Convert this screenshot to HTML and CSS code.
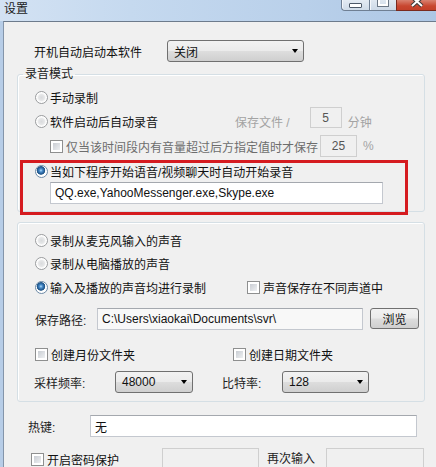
FILE: index.html
```html
<!DOCTYPE html>
<html lang="zh-CN">
<head>
    <meta charset="UTF-8">
    <title>设置</title>
    <link rel="stylesheet" href="styles.css">
</head>
<body>
    <div class="window">
        <div class="titlebar">
            <span class="title">设置</span>
            <div class="caption">
                <span class="cap cap-min"><i></i></span>
                <span class="cap cap-max"><i></i></span>
                <span class="cap cap-close">
                    <svg width="40" height="11" viewBox="0 0 40 11">
                        <path d="M14 -3 L24 6 M24 -3 L14 6" stroke="#3b3b3b" stroke-width="4" fill="none"/>
                        <path d="M14 -3 L24 6 M24 -3 L14 6" stroke="#fff" stroke-width="2" fill="none"/>
                    </svg>
                </span>
            </div>
        </div>

        <div class="client">
            <div class="row startup">
                <span class="lbl-startup">开机自动启动本软件</span>
                <div class="combo combo-startup">关闭</div>
            </div>

            <fieldset class="group mode">
                <legend>录音模式</legend>
                <div class="opt"><span class="radio"></span>手动录制</div>
                <div class="opt opt-tall">
                    <span class="radio"></span>
                    <span class="opt-auto">软件启动后自动录音</span>
                    <span class="dim">保存文件 /</span>
                    <span class="edit off spin">5</span>
                    <span class="dim unit">分钟</span>
                </div>
                <div class="opt opt-sub">
                    <span class="check"></span>
                    <span class="muted">仅当该时间段内有音量超过后方指定值时才保存</span>
                    <span class="edit off pct">25</span>
                    <span class="dim unit">%</span>
                </div>
                <div class="highlight">
                    <div class="opt"><span class="radio on"></span>当如下程序开始语音/视频聊天时自动开始录音</div>
                    <div class="edit apps">QQ.exe,YahooMessenger.exe,Skype.exe</div>
                </div>
            </fieldset>

            <fieldset class="group source">
                <div class="opt"><span class="radio"></span>录制从麦克风输入的声音</div>
                <div class="opt opt-short"><span class="radio"></span>录制从电脑播放的声音</div>
                <div class="opt">
                    <span class="radio on"></span>
                    <span class="opt-both">输入及播放的声音均进行录制</span>
                    <span class="check"></span>声音保存在不同声道中
                </div>
                <div class="row path-row">
                    <span class="lbl-path">保存路径:</span>
                    <span class="edit ro path">C:\Users\xiaokai\Documents\svr\</span>
                    <span class="btn browse">浏览</span>
                </div>
                <div class="row folder-row">
                    <span class="folder-month"><span class="check"></span>创建月份文件夹</span>
                    <span class="check"></span>创建日期文件夹
                </div>
                <div class="row rate-row">
                    <span class="lbl-rate">采样频率:</span>
                    <div class="combo combo-rate">48000</div>
                    <span class="lbl-bit">比特率:</span>
                    <div class="combo combo-bit">128</div>
                </div>
            </fieldset>

            <div class="row hotkey-row">
                <span class="lbl-hotkey">热键:</span>
                <span class="edit hotkey">无</span>
            </div>
            <div class="row pass-row">
                <span class="pass-check"><span class="check"></span>开启密码保护</span>
                <span class="edit off pass"></span>
                <span class="lbl-again">再次输入</span>
                <span class="edit off pass2"></span>
            </div>
        </div>
    </div>
</body>
</html>
```

FILE: styles.css
```css
body {
    margin: 0;
    font-family: "Liberation Sans", "Noto Sans CJK SC", sans-serif;
    font-size: 12px;
    color: #000;
    background: #b9cfe8;
    overflow: hidden;
}
.window {
    width: 436px;
    height: 467px;
    display: flex;
    flex-direction: column;
    background: #b7cde7;
}
.titlebar {
    height: 21px;
    flex: none;
    display: flex;
    justify-content: space-between;
    align-items: flex-start;
    background: linear-gradient(to right, #d3e2f3 0%, #c5d9ef 30%, #b9d0ea 70%, #adc7e5 100%);
}
.title {
    padding-left: 4px;
    line-height: 18px;
    color: #1b1b1b;
}
.caption {
    display: flex;
    height: 11px;
    margin-right: -4px;
}
.cap {
    box-sizing: border-box;
    height: 11px;
    border: 1px solid #6f7f93;
    border-top: none;
    display: flex;
    justify-content: center;
}
.cap-min {
    width: 28px;
    border-radius: 0 0 0 4px;
    border-right: none;
    background: linear-gradient(#e4ebf3, #cfdbe8);
    box-shadow: inset 1px 0 0 #f4f7fb;
}
.cap-min i {
    display: block;
    width: 11px;
    height: 3px;
    margin-top: 3px;
    background: #fff;
    border: 1px solid #4d5968;
    border-radius: 1px;
}
.cap-max {
    width: 27px;
    border-right: none;
    background: linear-gradient(#e0e8f1, #cdd9e7);
    box-shadow: inset 1px 0 0 #f4f7fb;
}
.cap-max i {
    display: block;
    box-sizing: border-box;
    width: 10px;
    height: 6px;
    border: 2px solid #fff;
    border-top: none;
    outline: 1px solid #6c7886;
}
.cap-close {
    width: 44px;
    border-color: #7a2a1e;
    background: linear-gradient(#d98270, #c8462f 60%, #c2402a);
}
.client {
    flex: 1;
    margin-left: 3px;
    border-left: 1px solid #8495aa;
    border-top: 1px solid #6d7b8c;
    background: #f0f0f0;
}
.row {
    display: flex;
    align-items: center;
}
.startup {
    height: 22px;
    margin-top: 18px;
    padding-left: 30px;
}
.lbl-startup {
    width: 133px;
    color: #111;
}
.combo {
    box-sizing: border-box;
    height: 22px;
    padding: 0 5px 0 6px;
    border: 1px solid #707070;
    border-radius: 3px;
    background: linear-gradient(#f2f2f2 0%, #ebebeb 48%, #dddddd 52%, #cfcfcf 100%);
    display: flex;
    align-items: center;
    justify-content: space-between;
    color: #111;
}
.combo::after {
    content: "";
    border-left: 3.5px solid transparent;
    border-right: 3.5px solid transparent;
    border-top: 4px solid #000;
}
.combo-startup {
    width: 137px;
}
.group {
    box-sizing: border-box;
    width: 408px;
    margin: 0 0 0 13px;
    padding: 0;
    min-width: 0;
    border: 1px solid #d5dfe5;
    border-radius: 3px;
    box-shadow: inset 1px 1px 0 #fff;
}
.group legend {
    margin-left: 5px;
    padding: 0 2px;
    line-height: 14px;
    color: #1a1a1a;
}
.mode {
    margin-top: 5px;
    padding-top: 4px;
}
.source {
    margin-top: 10px;
    padding: 5px 0 8px 0;
}
.opt {
    height: 24px;
    padding-left: 17px;
    display: flex;
    align-items: center;
    white-space: nowrap;
    color: #111;
}
.opt-tall {
    height: 25px;
}
.opt-short {
    height: 23px;
}
.opt-sub {
    padding-left: 32px;
}
.radio {
    box-sizing: border-box;
    width: 13px;
    height: 13px;
    margin-right: 2px;
    flex: none;
    border: 1px solid #9a9c9e;
    border-radius: 50%;
    background: radial-gradient(circle, #d9dbdd 0, #e6e7e8 3px, #f7f7f7 4px, #fff 5px);
}
.radio.on {
    border-color: #6d8aa6;
    background: radial-gradient(circle at 45% 40%, #b7e0f8 0, #4b8fce 1.5px, #22598f 3.5px, #2d5f8d 4px, #fff 4.6px);
}
.check {
    box-sizing: border-box;
    width: 13px;
    height: 13px;
    margin-right: 3px;
    padding: 2px;
    flex: none;
    border: 1px solid #8e8f8f;
    background: linear-gradient(135deg, #c9cdd3, #eef0f2) content-box, #fff;
}
.opt-auto {
    width: 185px;
}
.dim {
    color: #a3a3a3;
}
.muted {
    color: #6d6d6d;
}
.unit {
    margin-left: 6px;
}
.edit {
    box-sizing: border-box;
    height: 22px;
    padding: 0 4px;
    border: 1px solid #c4c8cf;
    border-top-color: #a4a8ae;
    background: #fff;
    display: flex;
    align-items: center;
    white-space: nowrap;
    color: #111;
}
.edit.off {
    justify-content: center;
    background: #f0f0f0;
    border-color: #cfcfcf;
    color: #555;
}
.edit.ro {
    background: #f8f8f8;
}
.spin {
    width: 32px;
    height: 21px;
    margin: 0 0 8px 20px;
}
.pct {
    width: 37px;
    margin-left: 2px;
}
.highlight {
    width: 382px;
    margin: 1px 0 -1px 5px;
    padding-bottom: 8px;
    outline: 3px solid #d51b20;
}
.highlight .opt {
    height: 16px;
    margin-top: 5px;
    padding-left: 12px;
}
.apps {
    width: 333px;
    margin: 3px 0 0 27px;
}
.opt-both {
    width: 197px;
}
.path-row {
    height: 22px;
    margin-top: 9px;
    padding-left: 17px;
}
.lbl-path {
    width: 62px;
    color: #222;
}
.path {
    width: 266px;
}
.btn {
    box-sizing: border-box;
    width: 49px;
    height: 21px;
    margin: 0 0 2px 7px;
    border: 1px solid #707070;
    border-radius: 3px;
    background: linear-gradient(#f2f2f2 0%, #ebebeb 48%, #dddddd 52%, #cfcfcf 100%);
    display: flex;
    align-items: center;
    justify-content: center;
    color: #111;
}
.folder-row {
    height: 24px;
    margin-top: 12px;
    padding-left: 17px;
    color: #111;
}
.folder-month {
    width: 198px;
    display: flex;
    align-items: center;
}
.rate-row {
    height: 22px;
    margin-top: 5px;
    padding-left: 16px;
}
.lbl-rate {
    width: 81px;
    color: #222;
}
.combo-rate {
    width: 78px;
}
.lbl-bit {
    width: 60px;
    margin-left: 29px;
    color: #222;
}
.combo-bit {
    width: 87px;
}
.hotkey-row {
    height: 22px;
    margin-top: 13px;
    padding-left: 24px;
}
.lbl-hotkey {
    width: 62px;
    color: #222;
}
.hotkey {
    width: 327px;
}
.pass-row {
    height: 22px;
    margin-top: 11px;
    padding-left: 27px;
    align-items: flex-start;
}
.pass-check {
    width: 131px;
    height: 22px;
    display: flex;
    align-items: center;
    color: #111;
}
.pass {
    width: 97px;
}
.lbl-again {
    width: 59px;
    margin-left: 8px;
    line-height: 22px;
    color: #222;
}
.pass2 {
    width: 98px;
}
```
